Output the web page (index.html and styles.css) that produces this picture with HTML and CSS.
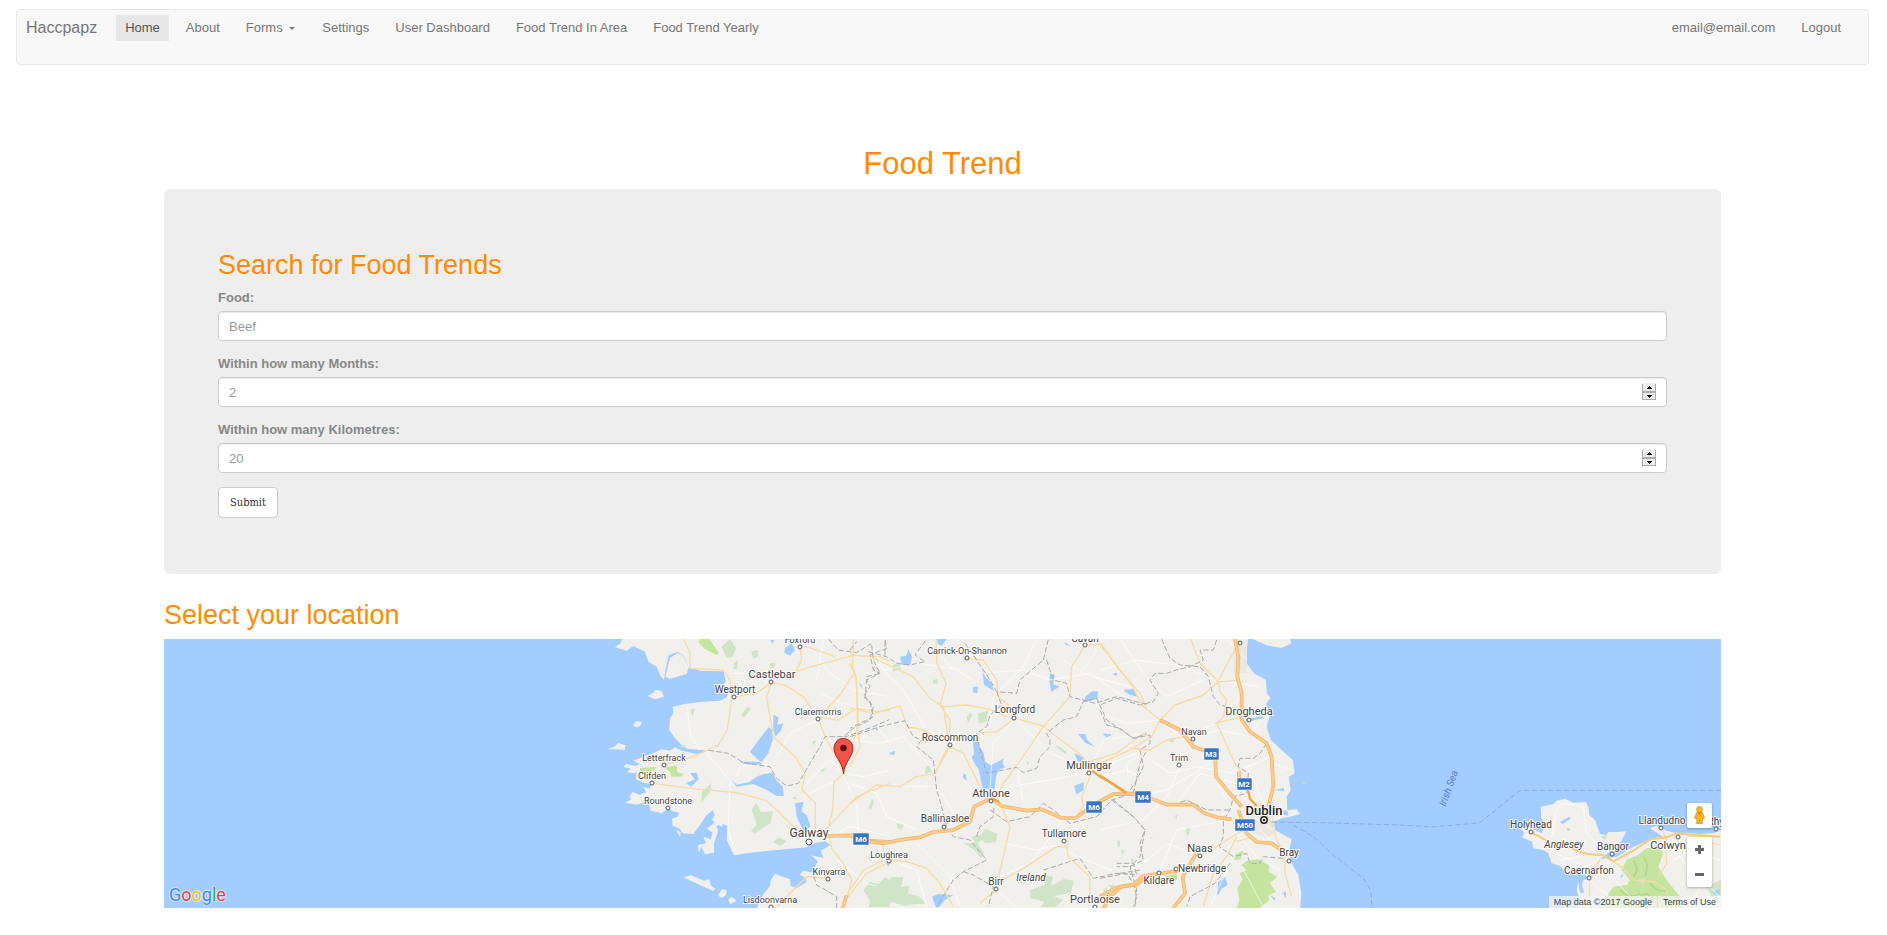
FILE: index.html
```html
<!DOCTYPE html>
<html lang="en">
<head>
<meta charset="utf-8">
<title>Haccpapz - Food Trend</title>
<link rel="stylesheet" href="styles.css">
</head>
<body>
<nav class="navbar">
  <a class="brand" href="#">Haccpapz</a>
  <ul class="nav">
    <li><a class="active" href="#">Home</a></li>
    <li><a href="#">About</a></li>
    <li><a href="#">Forms <span class="caret"></span></a></li>
    <li><a href="#">Settings</a></li>
    <li><a href="#">User Dashboard</a></li>
    <li><a href="#">Food Trend In Area</a></li>
    <li><a href="#">Food Trend Yearly</a></li>
  </ul>
  <ul class="nav nav-right">
    <li><a href="#">email@email.com</a></li>
    <li><a href="#">Logout</a></li>
  </ul>
</nav>
<main class="container">
  <h1>Food Trend</h1>
  <form class="panel">
    <h2>Search for Food Trends</h2>
    <div class="field">
      <label for="food">Food:</label>
      <input id="food" type="text" placeholder="Beef">
    </div>
    <div class="field">
      <label for="months">Within how many Months:</label>
      <div class="number">
        <input id="months" type="number" placeholder="2">
        <svg class="spinner" viewBox="0 0 14 17" aria-hidden="true"><path fill="#eee" d="M0 0h14v17H0z"/><path fill="#aaa" d="M0 1h1v16H0zM13 1h1v16h-1zM0 8h14v2H0zM0 16h14v1H0z"/><path d="M7 3h1v1h1v1h1v1H5V5h1V4h1zM5 12h5v1H9v1H8v1H7v-1H6v-1H5z"/></svg>
      </div>
    </div>
    <div class="field">
      <label for="km">Within how many Kilometres:</label>
      <div class="number">
        <input id="km" type="number" placeholder="20">
        <svg class="spinner" viewBox="0 0 14 17" aria-hidden="true"><path fill="#eee" d="M0 0h14v17H0z"/><path fill="#aaa" d="M0 1h1v16H0zM13 1h1v16h-1zM0 8h14v2H0zM0 16h14v1H0z"/><path d="M7 3h1v1h1v1h1v1H5V5h1V4h1zM5 12h5v1H9v1H8v1H7v-1H6v-1H5z"/></svg>
      </div>
    </div>
    <button class="submit" type="submit">Submit</button>
  </form>
  <h2>Select your location</h2>
  <div class="map">
    <svg class="tiles" viewBox="164 639 1557 269" preserveAspectRatio="xMidYMid slice">
      <!-- west coast -->
      <g transform="translate(590 630) scale(.33333)">
        <path class="land" d="M100 20L92 40 75 52 110 62 130 48 165 65 175 95 200 110 210 135 222 150 226 120 236 76 262 66 282 78 296 112 330 122 400 124 408 155 402 160 416 186 410 202 390 212 330 216 285 222 248 230 250 250 240 265 238 300 255 325 275 345 292 357 345 366 320 372 275 362 255 352 240 362 214 358 190 370 165 378 130 392 150 402 138 408 108 402 100 410 122 416 112 426 130 430 140 426 138 448 160 458 184 463 180 476 160 470 168 486 150 494 128 486 118 500 124 508 106 518 138 524 158 520 175 512 182 542 215 550 235 535 250 545 268 548 262 560 246 566 248 588 270 596 278 610 310 612 330 585 350 555 368 541 376 560 372 580 350 595 368 608 362 628 340 620 348 640 324 645 326 668 334 650 345 672 372 668 372 640 385 600 378 590 392 578 412 588 410 630 432 676 480 668 560 660 650 652 672 640 705 634 722 644 692 662 700 684 664 676 684 694 674 712 680 730 640 722 628 735 646 742 650 755 620 775 602 768 600 748 555 732 542 750 540 768 515 800 500 835 900 840 900 20z"/>
        <path class="land" d="M172 198L188 190 196 180 214 182 222 200 195 208zM129 286L138 274 155 276 152 287 138 292zM50 358L74 350 84 339 106 346 104 360 84 358zM280 742L302 736 342 752 358 748 362 766 376 776 370 783 330 765zM384 796L396 778 410 780 408 796 394 804zM414 810L424 800 440 812 422 822zM240 84L262 70 280 78 296 112 290 132 240 146 226 140zM258 600L272 606 270 620zM366 570L380 545 388 572 400 575 396 592z"/>
        <path class="mead" d="M394 50l26-22 18 25-10 28-18 2zM432 98l12-8-2 26-12 2zM484 64l18-4 4 18-16 8zM540 100l16-2-4 18-14-4zM300 240l14-6-6 28zM452 258l20-28 12 6-22 26zM266 350l18-6 4 10zM336 486l28-28-4 30-26 28zM485 540l14-22 14 28 36-2-6 34-48 32-12-8 18-16zM548 636l20-14 22 12-18 14zM605 505l12-6 4 10zM846 505l6 10-8 22-8-2zM666 335l12-4-6 16zM690 420l16-6-8 14zM820 780l20-24 26 6 18-20 16 8v82h-64l4-20z"/>
        <path class="park" d="M330 27h28l28 42-6 6-36-18-20-22zM222 412l38-6 2 20 18 6-4 8-32 0-6-16zM150 414l50-4-10 14-40 12z"/>
        <path class="lake" d="M510 325L536 292 548 300 548 330 535 370 515 396 502 388 480 365zM550 255L566 262 562 285 580 280 574 300 556 320 550 300zM425 450L440 464 478 456 500 440 520 432 548 428 558 450 578 470 582 498 560 498 530 480 490 462 440 470zM615 520L640 515 635 545 650 555 662 590 640 602 620 560zM585 55L605 40 615 60 600 77 583 68zM450 395h60l10 12-60-6zM300 430l20-2 6 20-22 22-16-10 26-12zM540 30h12l-4 12zM280 356l66 5-4 6-50-2z"/>
        <path class="minor" d="M292 232L300 310 330 360M345 366L420 450 415 600 432 660M540 160L470 130 420 130M660 50L720 130 790 180 900 200M560 380L600 310 690 268M640 470L720 390 760 430 800 530 805 600M760 430L820 440 900 420M640 500L730 455 760 430M680 150L700 27M560 400L450 410 440 440M690 190L760 220 850 240M810 330L860 290 900 340M720 620L780 590 900 620M740 690L830 760 900 780"/>
        <path class="road" d="M282 27L300 70 300 115 400 120 420 150 425 200M425 205L412 300 385 345 310 380 220 405M435 200L500 190 543 158 585 165 640 200 684 265 710 330 745 390 762 430 732 455 728 540 715 590 690 620M543 165L530 200 550 320 620 385 645 430 636 480 676 520 676 610M616 125L700 100 790 76 870 80 900 95M630 50L635 90 615 130M790 27L788 110 798 140 805 280 780 370 762 430M788 135L750 195 708 240 690 262 745 270 800 235 870 245 900 240M186 460L330 478 440 488 530 512 570 550 620 600M650 50L735 80M715 590L800 500 900 460M720 620L725 655 760 700 785 750 772 800M720 745L650 740 600 790 560 830M775 800L830 730 890 700"/>
        <path class="border" d="M715 27L745 60 800 68 845 40M845 45L850 90 870 130 830 140 826 200 850 230 840 270 790 295 760 320 705 320 690 350 660 400 625 460 590 468 560 445 540 410 460 398 415 370 350 360M885 35V75M740 330L850 290 900 268M672 740L680 765 740 800 740 835"/>
        <path class="mw-edge" d="M712 618L790 616 830 632 900 636M770 796L758 836"/><path class="mw" d="M712 618L790 616 830 632 900 636M770 796L758 836"/>
      </g>
      <!-- midlands -->
      <g transform="translate(850 630) scale(.33333)">
        <path class="land" d="M118 20h800v820H118z"/>
        <path class="mead" d="M130 105l22-8v22l-24 6zM250 150l14-4-2 16-14-2zM350 260l12-14 6 10-14 22zM384 250l30-8-4 34-24 4zM228 410l12-4 4 20-20 6zM620 345l30 20-4 6-28-20zM140 580l22 4-8 16-12-6zM364 620l30-6 12-18 36 16-4 24-32 4-8-10-20 10zM340 640l42-2 20 30-8 16-24-26zM60 790l30-30 20 12 12-30 38 0-8 30 26-6-4 24 36 10 16 22h-30l-32 6-40-12-20 12-34-6 10-16zM540 780l44-16-4-28 30 4-8 28 38-20 32 4-10 36-50 10 28 12-26 22-44 0 14-16-44-12zM800 640l10-6-2 22zM528 394l10 4-4 10z"/>
        <path class="lake" d="M368 322l20 4-2 20 14 20 6 30 16 10 20-10 18-10-2 16 8 10-20 8-8 20-4 36-36 2-8-40-4-20-10-14-12-24 8-6zM150 80l18-2 8-20 10 22-6 28-24-4zM260 27h30l-14 20-12-4zM396 118l10 22 18 18 8 26-30-20zM370 170h14l-2 20-14-4zM600 130l14 4-4 30 20 4-26 18-6-30zM706 200l20-16 18 0-2 22-40 10zM822 178l28 2 10 20-22-8zM684 312l22 0 4 16 24 22-28-12zM674 370l26 12-6 16-12-6zM672 468l30-12-2 24-20 14zM340 430l8 6 2 16-12-10zM246 800l20-8 44 4-26 14-16 22h-10zM116 370l20-8-4 14zM78 290l8 10-8 2zM26 160l10 4 0 12zM108 700l12-4-4 14zM644 35l18 14-14-4zM760 310l26 4-18 6z"/>
        <path class="minor" d="M60 80L160 180 230 300 300 340M0 330L90 340 160 320 250 420M0 460L80 490 110 560 200 600M300 345L420 290 430 200M370 150L300 110 260 60M390 130L520 120 600 150 720 130 820 200M495 265L430 340 420 480M495 265L600 370 700 410M424 510L480 470 600 450 700 430 860 370M330 580L260 470 140 470M120 690L200 720 230 830M200 640L300 740 330 830M440 780L520 850M460 640L560 660 640 640M640 570L540 700 450 740M640 660L780 720 900 690M520 520L500 400 590 290M700 120L740 60 720 27M720 420L760 330 880 310M840 490L830 400 900 360M560 27L520 110 440 190M880 180L800 160 700 130 640 90M60 27L100 120 210 100 330 120"/>
        <path class="road" d="M0 74L60 80 190 140 240 205 280 230 350 225 420 238 470 260M280 230L298 340 255 430M258 27L260 100 288 160 270 225 300 270 298 340M0 235L70 250 150 228 172 290 220 300 255 320 300 335M0 520L80 465 150 470 200 440 255 430 300 350 340 370 370 430 395 480M388 308L440 305 495 265 580 288 620 320 700 380 716 425M350 85L400 90 440 150 445 200 475 225 470 245M706 45L665 110 660 200 580 290 540 350 490 420 460 460 440 505M712 45L755 42 800 110 870 190 900 260M720 440L695 500 700 530 680 560M716 395L800 370 880 310 900 305M840 355L900 360M438 780L455 700 480 590 455 530M440 760L520 715 620 650 650 650 655 630 640 600M650 650L655 680 720 740 720 820M120 690L170 695 230 715 270 760 310 830M100 645L100 690 40 720 0 780M440 780L390 820M0 100L20 150 22 290 30 350 0 410"/>
        <path class="border" d="M0 60L20 35M55 65L110 80 140 100 180 105 225 95 195 75 230 27M105 30L110 55 60 75 70 120 90 130 50 150 60 170 40 200 60 215 70 260 0 295M0 320L90 290 165 272 190 320 215 330 200 350 250 390 260 480 275 530 290 590 310 620 360 630 410 690 340 725 310 750 285 790 260 830M345 40L380 90 420 150 440 185 500 190 510 150 580 90 595 27M440 185L455 225 420 255 410 290 380 310 388 350 410 430 500 412 520 428 560 415 570 380 600 350 600 330 590 310 640 270 680 260 700 215 740 205 770 270 850 325 895 310M420 540L470 575 540 560 580 520 610 540 660 580 740 560 785 510 850 490 870 400 900 340M380 620L390 590 430 560 432 530M340 725L370 735 430 770 415 830M590 90L610 150 650 160 660 200 735 220 800 200 900 225M580 720L690 685 730 745 800 730 860 735 850 700 800 700M785 510L850 560 885 600 870 680 840 710 860 780 855 830"/>
        <path class="mw-edge" d="M0 617L60 635 100 640 160 628 210 622 250 606 310 600 360 575 372 530 424 505 455 528 530 542 575 538 635 564 676 564 740 520 790 492 900 494M900 732L860 764 815 770 780 800 760 836"/><path class="mw" d="M0 617L60 635 100 640 160 628 210 622 250 606 310 600 360 575 372 530 424 505 455 528 530 542 575 538 635 564 676 564 740 520 790 492 900 494M900 732L860 764 815 770 780 800 760 836"/>
        <path class="mw-dark" d="M726 422L750 440 790 462 832 490M428 506L448 516"/>
      </g>
      <!-- east coast -->
      <g transform="translate(1100 630) scale(.33333)">
        <path class="land" d="M140 20H445L440 60 440 100 462 130 498 150 500 190 512 204 498 222 512 250 500 290 512 330 545 360 578 390 584 430 566 440 572 480 560 500 562 540 590 538 600 552 570 560 545 565 520 575 525 600 575 628 568 660 575 700 595 735 604 790 600 840H140zM458 27L570 27 574 40 545 54 500 46z"/>
        <path class="mead" d="M265 590l6 10-8 22-6-20zM62 660l12 2-6 12zM225 556l8 0-4 14zM52 632l8 0 0 14-6 6zM150 620l8 4-6 4zM92 685l8 2-2 14zM210 325l14 0-2 12-14 0zM100 460l6 0-2 18zM10 780l10-10 4 30-14 6zM24 765l18 0-2 16z"/>
        <path class="park" d="M412 775L428 748 418 730 440 720 424 706 440 692 480 688 508 704 506 726 532 740 510 760 528 786 505 796 508 810 480 834 410 834 418 810zM446 560l20-6 8 16-20 0zM604 455l16 2-8 6zM400 690l8-20 22-8-8 26zM195 738l36-6 0 18-20 6z"/>
        <path class="lake" d="M355 755l20-14 8 24-20 12-6 16-6 0zM70 182l30-6 10 22-20-4zM8 312l26 4-14 6zM524 480l28-6 0 10zM550 540l12 2 4 14-14 0zM436 268l55-10 0 6-50 12zM510 795l18 12-6 4zM36 132l16-4-2 10zM548 790l10-6 0 20z"/>
        <path class="city" d="M440 540L470 520 520 530 525 610 500 625 460 610zM400 30h40v100h-40z"/>
        <path class="minor" d="M0 120L110 90 230 105 350 150 480 170M180 270L240 320 300 300 350 280 420 200M60 27L130 130 200 200 310 150M0 250L80 280 180 270M110 360L210 430 290 410 400 430 510 380M240 410L200 500 130 570 0 600M280 320L360 300 450 320M100 500L200 480 330 400M230 520L300 430 440 470M300 680L200 640 130 700 60 740M180 725L230 600 380 570M400 600L480 690 540 720M380 27L440 90M460 300L500 250M520 400L575 420M240 700L330 690 400 640M350 460L400 540M440 640L390 700 330 830M480 600L530 650M460 560L520 600M430 720L490 830M490 520L470 470 440 410M0 440L80 420 120 440"/>
        <path class="road" d="M0 45L30 80 95 165 130 230 180 270 225 225 310 195 355 155 412 152M272 27L300 100 355 155 360 185 380 210 370 260 350 280 400 390 425 430M0 400L90 360 155 320 180 270M90 355L150 360 200 330 250 320M345 280L430 260M355 150L410 50M430 600L340 655M410 620L380 680 340 730 310 830M520 600L555 690 555 730 575 800M460 620L410 635M480 520L520 590"/>
        <path class="border" d="M185 27L210 85 240 105 300 110 325 140 340 200 360 225 400 235M350 30L340 60 300 60 310 90 270 110 230 120 200 130 165 130 150 150 175 190 160 215 120 225 50 205 0 225M0 240L20 285 60 295 100 325 150 315 150 340 120 360 130 410 105 460 90 480M500 340L480 370 460 385 420 385 415 410 445 430 440 490 400 500 390 540 370 570 370 620 358 650 400 680 440 670 450 700 480 700 490 680 550 685M220 525L260 510 320 540 390 540M40 510L100 560 135 600 120 640 130 690 90 710 50 710M0 745L80 730 100 760 110 800 100 830M60 730L120 720M390 700L345 760 270 800 260 830"/>
        <path class="mw-edge" d="M180 270L240 300 280 350 345 372 348 440 385 485 425 530M405 27L415 80 412 140 425 190 425 270 450 305 500 340 515 380 520 470 505 530M0 514L40 492 90 490 160 508 200 524 280 524 310 548 350 562 395 568M416 425L418 450M415 540L440 610 470 636 515 640 550 665M220 834L255 790 248 740 290 668M0 800L50 772 100 764 130 738 240 722"/><path class="mw" d="M180 270L240 300 280 350 345 372 348 440 385 485 425 530M405 27L415 80 412 140 425 190 425 270 450 305 500 340 515 380 520 470 505 530M0 514L40 492 90 490 160 508 200 524 280 524 310 548 350 562 395 568M416 425L418 450M415 540L440 610 470 636 515 640 550 665M220 834L255 790 248 740 290 668M0 800L50 772 100 764 130 738 240 722"/>
        <path class="mw-dark" d="M0 436L78 490M444 480L450 506 470 528"/>
        <path class="ferry" d="M515 576L700 579 900 585 1000 591 1140 578 1260 481 1863 481M580 585L640 620 700 675 790 745 812 780 816 834"/>
      </g>
      <!-- north Wales -->
      <g transform="translate(1400 700) scale(.33333)">
        <path class="land" d="M422 320L460 312 470 302 495 296 520 308 558 306 566 325 568 345 585 360 600 402 620 405 625 396 652 396 680 394 662 425 640 450 620 462 600 475 582 510 560 530 545 515 505 520 480 498 455 490 445 460 430 450 400 445 396 425 366 412 372 398 362 386 385 380 400 388 425 400 436 370 424 355zM600 478L650 470 700 440 770 412 790 412 750 385 770 378 800 392 830 400 860 398 900 402 940 400 970 388 970 640 528 640 540 600 530 570 535 545 575 532z"/>
        <path class="park" d="M665 510L680 480 712 465 740 445 775 440 790 460 775 500 800 540 840 590 850 630 590 630 620 590 640 560 680 555 690 540z"/>
        <path class="mead" d="M920 560l42-20 8 40-30 20zM604 410l18-8-6 18zM710 540l26-8-4 24z"/>
        <path class="hill" d="M700 480q20 30 0 50M730 470q20 20 5 60M660 570q30 30 60 10M750 550q20 30 50 20M720 590q20-20 40 10"/>
        <path class="lake" d="M480 366l28-16 4 6-24 16zM500 385l12 2-8 6zM620 470l16-26 10-4-14 32zM534 540l18-8-6 24 6 22-12 0zM660 530l10-10-4 14zM935 580l24-14 0 20z"/>
        <path class="minor" d="M428 430L490 470 560 500 610 470M455 410L470 330 490 310 550 320 560 400 600 440M600 490L700 600 740 630M620 480L650 520M800 410L860 500 960 590M820 480L880 450 960 480M566 540L640 600M870 630L900 560M480 480L540 470"/>
        <path class="road" d="M392 396L440 422 500 440 560 462 610 466 640 484 700 452 750 418 800 412 830 400 880 408 960 410M640 484L670 505 700 540 760 545 800 570 806 620M566 620L570 540 600 478M785 385L800 420M795 430L800 490 770 540M960 434L920 428"/>
        <path class="trunk" d="M392 396L440 422M500 440L560 462 610 466 640 484 700 452 750 418 800 412 830 400 960 410"/>
      </g>
      <!-- town markers -->
      <g class="dots">
        <circle cx="800" cy="647" r="2"/><circle cx="771" cy="682" r="2"/><circle cx="734" cy="697" r="2"/><circle cx="818" cy="719" r="2"/><circle cx="664" cy="765" r="2"/><circle cx="652" cy="783" r="2"/><circle cx="668" cy="808" r="2"/><circle cx="809" cy="842" r="3"/><circle cx="828" cy="879" r="2"/><circle cx="771" cy="907" r="2"/>
        <circle cx="967" cy="658" r="2"/><circle cx="1085" cy="645" r="2"/><circle cx="1014" cy="718" r="2"/><circle cx="950" cy="745" r="2"/><circle cx="1089" cy="773" r="2"/><circle cx="991" cy="801" r="2"/><circle cx="944" cy="827" r="2"/><circle cx="889" cy="861" r="2"/><circle cx="1064" cy="841" r="2"/><circle cx="996" cy="889" r="2"/><circle cx="1095" cy="907" r="2"/>
        <circle cx="1240" cy="643" r="2"/><circle cx="1249" cy="720" r="2"/><circle cx="1193" cy="739" r="2"/><circle cx="1179" cy="765" r="2"/><circle cx="1200" cy="856" r="2"/><circle cx="1176" cy="869" r="2"/><circle cx="1159" cy="873" r="2"/><circle cx="1289" cy="861" r="2"/>
        <circle cx="1531" cy="832" r="2"/><circle cx="1612" cy="854" r="2"/><circle cx="1589" cy="878" r="2"/><circle cx="1661" cy="828" r="2"/><circle cx="1678" cy="837" r="2"/><circle cx="1716" cy="829" r="2"/>
      </g>
      <circle cx="1264" cy="820" r="3.2" fill="#fff" stroke="#222" stroke-width="1.5"/><circle cx="1264" cy="820" r="1.3" fill="#222"/>
      <!-- motorway shields -->
      <g class="shields">
        <rect x="853" y="833" width="16" height="12"/><rect x="1086" y="801" width="16" height="12"/><rect x="1135" y="791" width="16" height="12"/><rect x="1204" y="748" width="15" height="12"/><rect x="1237" y="778" width="15" height="12"/><rect x="1235" y="819" width="20" height="12"/>
        <text x="861" y="842">M6</text><text x="1094" y="810">M6</text><text x="1143" y="800">M4</text><text x="1211" y="757">M3</text><text x="1244" y="787">M2</text><text x="1245" y="828">M50</text>
      </g>
      <!-- place names -->
      <g class="small">
        <text x="800" y="643">Foxford</text><text x="818" y="715">Claremorris</text><text x="664" y="761">Letterfrack</text><text x="652" y="779">Clifden</text><text x="668" y="804">Roundstone</text><text x="829" y="875">Kinvarra</text><text x="770" y="903">Lisdoonvarna</text><text x="967" y="654">Carrick-On-Shannon</text><text x="889" y="858">Loughrea</text><text x="1194" y="735">Navan</text><text x="1179" y="761">Trim</text>
      </g>
      <g class="medium">
        <text x="735" y="693">Westport</text><text x="1015" y="713">Longford</text><text x="950" y="741">Roscommon</text><text x="945" y="822">Ballinasloe</text><text x="1064" y="837">Tullamore</text><text x="996" y="885">Birr</text><text x="1202" y="872">Newbridge</text><text x="1159" y="884">Kildare</text><text x="1289" y="856">Bray</text><text x="1531" y="828">Holyhead</text><text x="1613" y="850">Bangor</text><text x="1589" y="874">Caernarfon</text><text x="1662" y="824">Llandudno</text><text x="1717" y="825">Rhyl</text><text x="1085" y="642">Cavan</text><text class="italic" x="1031" y="881">Ireland</text><text class="italic" x="1564" y="848">Anglesey</text>
      </g>
      <g class="large">
        <text x="772" y="678">Castlebar</text><text x="1089" y="769">Mullingar</text><text x="991" y="797">Athlone</text><text x="1095" y="903">Portlaoise</text><text x="1249" y="715">Drogheda</text><text x="1200" y="852">Naas</text><text x="1668" y="849">Colwyn</text>
      </g>
      <text class="galway" x="809" y="837">Galway</text>
      <text class="dublin" x="1264" y="815">Dublin</text>
      <text class="sea" x="1448" y="792" transform="rotate(-70 1448 788)">Irish Sea</text>
      <!-- selected location pin -->
      <path fill="#f2544b" stroke="#a8281e" d="M843.500 774C843 762 834 757 834 748a9.500 9.500 0 0 1 19 0C853 757 844 762 843.500 774z"/><circle cx="843.500" cy="748" r="3.300" fill="#5c0f0b"/>
    </svg>
    <a class="google" href="#" aria-label="Google"><span class="b">G</span><span class="r">o</span><span class="y">o</span><span class="b">g</span><span class="g">l</span><span class="r">e</span></a>
    <div class="controls">
      <button class="pegman" type="button" aria-label="Street View"><svg width="11" height="19" viewBox="0 0 11 19"><ellipse cx="5.500" cy="17" rx="4.500" ry="1.300" fill="#ddd"/><path fill="#fbb61c" stroke="#c98a12" stroke-width=".6" d="M2.500 6.500h6L10.500 12l-1.500.8L8.500 12 8 17.500H6L5.500 14 5 17.500H3L2.500 12 2 12.800.5 12z"/><circle cx="5.500" cy="3.500" r="3" fill="#fbb61c" stroke="#c98a12" stroke-width=".6"/><path fill="#e8711c" d="M3.500 6.600h4L5.500 9z"/></svg></button>
      <div class="zoom">
        <button type="button" aria-label="Zoom in"><svg width="9" height="9" viewBox="0 0 9 9"><path fill="#666" d="M3 0h3v3h3v3H6v3H3V6H0V3h3z"/></svg></button>
        <button type="button" aria-label="Zoom out"><svg width="9" height="9" viewBox="0 0 9 9"><path fill="#666" d="M0 3h9v3H0z"/></svg></button>
      </div>
    </div>
    <div class="legal"><span>Map data ©2017 Google</span><a href="#">Terms of Use</a></div>
  </div>
</main>
</body>
</html>
```

FILE: styles.css
```css
* { box-sizing: border-box; }
body {
  margin: 0;
  background: #fff;
  color: #888;
  font: 13px/18px "Liberation Sans", Arial, sans-serif;
}
a { color: inherit; text-decoration: none; }
button { font: inherit; cursor: pointer; }

.navbar {
  display: flex;
  align-items: flex-start;
  margin: 9px 18px 0 16px;
  padding: 5px 18px 23px 9px;
  background: #f8f8f8;
  border: 1px solid #e7e7e7;
  border-radius: 4px;
  color: #777;
}
.brand { padding: 4px 0; margin-right: 19px; font-size: 16px; }
.nav { display: flex; gap: 8px; margin: 0; padding: 0; list-style: none; }
.nav a { display: block; padding: 4px 9px; }
.nav .active { background: #e7e7e7; color: #555; }
.nav-right { margin-left: auto; }
.caret {
  display: inline-block;
  margin-left: 3px;
  margin-right: 1px;
  vertical-align: middle;
  border: 3px solid transparent;
  border-top-color: currentColor;
  border-bottom: 0;
}

.container { padding: 0 166px 27px 164px; }
h1, h2 { margin: 0 0 8px; color: #ff8c00; font-weight: 400; }
h1 { margin-top: 82px; font-size: 31px; line-height: 34px; text-align: center; }
h2 { font-size: 27px; line-height: 31px; }

.panel {
  margin-bottom: 26px;
  padding: 61px 54px 56px;
  background: #eee;
  border-radius: 6px;
}
.field { margin-bottom: 14px; }
label { display: block; margin-bottom: 4px; font-weight: 700; }
input {
  display: block;
  width: 100%;
  height: 30px;
  padding: 5px 10px;
  background: #fff;
  border: 1px solid #ccc;
  border-radius: 4px;
  box-shadow: inset 0 1px 1px rgba(0, 0, 0, .08);
  color: #555;
  font: inherit;
  appearance: textfield;
}
input::placeholder { color: #999; opacity: 1; }
.number { position: relative; }
.spinner { position: absolute; right: 11px; top: 6px; width: 14px; height: 17px; }
.submit {
  display: block;
  height: 31px;
  padding: 0 11px;
  background: #fff;
  border: 1px solid #ccc;
  border-radius: 4px;
  color: #333;
  font: 11px/18px "DejaVu Serif Condensed", "DejaVu Serif", serif;
}

.map { position: relative; height: 269px; overflow: hidden; background: #a3ccff; }
.tiles { display: block; width: 100%; height: 100%; font-family: Roboto, sans-serif; }
.land { fill: #f2f0ed; }
.city { fill: #ebe7e2; }
.mead { fill: #d0e4c8; }
.park { fill: #c5e4a0; }
.lake { fill: #a3ccff; }
.minor, .road, .trunk, .border, .ferry, .mw, .mw-edge, .mw-dark, .hill { fill: none; stroke-linejoin: round; }
.minor { stroke: #fff; stroke-width: 2; }
.road { stroke: #f5dca4; stroke-width: 4; }
.trunk { stroke: #f3cd82; stroke-width: 6; }
.border { stroke: #aaa; stroke-width: 3; stroke-dasharray: 16 7; }
.ferry { stroke: #7fadf0; stroke-width: 3; stroke-dasharray: 16 8; }
.mw-edge { stroke: #eeb568; stroke-width: 11; }
.mw { stroke: #fccb8b; stroke-width: 7; }
.mw-dark { stroke: #eda748; stroke-width: 7; }
.hill { stroke: #b3d68c; stroke-width: 5; }
.dots circle { fill: #fff; stroke: #555; }
.tiles text {
  fill: #444;
  stroke: #fff;
  stroke-width: 2px;
  stroke-opacity: .8;
  paint-order: stroke;
  text-anchor: middle;
}
.small { font-size: 9px; }
.medium { font-size: 10px; }
.large { font-size: 11px; }
.italic { font-style: italic; }
.galway { font-size: 12px; }
.tiles .dublin { font-size: 13px; font-weight: 500; fill: #222; }
.tiles .sea { fill: #5580c4; stroke: none; font-size: 10px; font-style: italic; }
.shields rect { fill: #3a74c4; stroke: #fff; stroke-opacity: .5; rx: 1px; }
.tiles .shields text { fill: #fff; stroke: none; font-size: 8px; font-weight: 700; }

.google {
  position: absolute;
  left: 5px;
  bottom: 3px;
  font: 400 18px/20px Roboto, sans-serif;
  text-shadow: 0 0 2px #fff, 0 0 2px #fff;
}
.b { color: #4285f4; }
.r { color: #ea4335; }
.y { color: #fbbc05; }
.g { color: #34a853; }
.controls { position: absolute; right: 9px; bottom: 21px; display: grid; gap: 9px; width: 25px; }
.controls button {
  display: grid;
  place-items: center;
  width: 25px;
  height: 25px;
  padding: 0;
  border: 0;
  background: none;
}
.controls .pegman, .zoom { background: #fff; border-radius: 2px; box-shadow: 0 1px 3px rgba(0, 0, 0, .3); }
.legal {
  position: absolute;
  right: 0;
  bottom: 0;
  display: flex;
  background: rgba(245, 245, 245, .75);
  color: #444;
  font: 9px/12px "Liberation Sans", Arial, sans-serif;
}
.legal > * { padding: 0 5px; }
.legal a { border-left: 1px solid #ddd; }
```
